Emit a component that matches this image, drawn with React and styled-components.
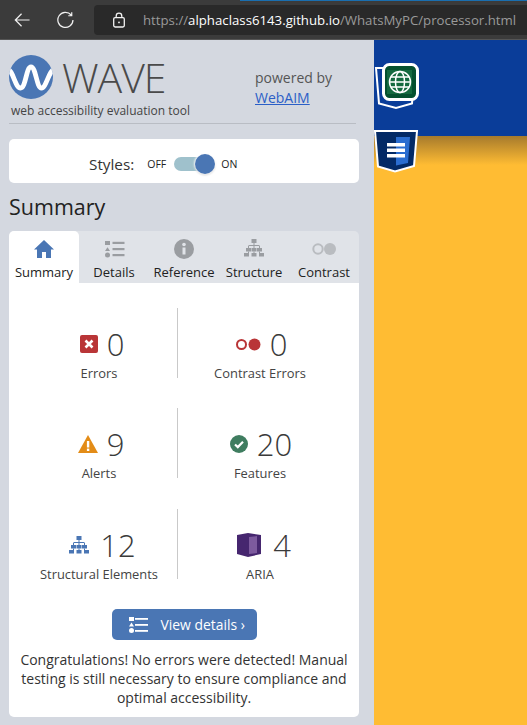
import React from "react";
import styled, { createGlobalStyle } from "styled-components";

const Global = createGlobalStyle`
  html, body { margin: 0; padding: 0; background: #d4d8e0; }
  body { width: 527px; height: 725px; overflow: hidden; font-family: "Open Sans", "Noto Sans", sans-serif; color: #333; }
  * { box-sizing: border-box; }
`;

const Page = styled.div`display: flex; flex-direction: column; width: 527px; height: 725px; overflow: hidden;`;

const BrowserBar = styled.header`
  position: relative; height: 40px; flex: none; background: #3b3b3b; display: flex; align-items: flex-start;
  padding: 5px 0 0 14px; border-bottom: 1px solid #555;
  &::before { content: ""; position: absolute; left: 240px; right: 0; top: 0; height: 1px; background: #1a6fb0; }
`;
const NavIcon = styled.svg`width: ${p => p.$w}px; height: 18px; flex: none; margin-top: 6px; margin-right: ${p => p.$gap}px;`;
const AddressField = styled.div`
  flex: 1; height: 30px; background: #292929; border-radius: 4px 0 0 4px; display: flex; align-items: center; padding-left: 18px; gap: 14px;
  font-family: "Open Sans", sans-serif; font-size: 13.23px; color: #9a9a9a; white-space: nowrap; overflow: hidden;
`;
const Host = styled.span`color: #fff;`;
const UrlText = styled.span`margin-left: 3px;`;

const Main = styled.div`flex: 1; display: flex; min-height: 0;`;
const Sidebar = styled.aside`width: 374px; flex: none; background: #d4d8e0; padding: 0 15px 0 9px; display: flex; flex-direction: column;`;

const Header = styled.div`display: flex; height: 84px; width: 347px; border-bottom: 1px solid #b9bdc4; position: relative;`;
const Brand = styled.div`width: 246px; padding-top: 15px;`;
const LogoRow = styled.div`display: flex; align-items: center; height: 44px; gap: 9px;`;
const Wordmark = styled.span`font-size: 41px; font-weight: 300; color: #4a4a4a; line-height: 44px; letter-spacing: -1px;`;
const Tagline = styled.div`font-size: 12px; color: #444; margin: 4px 0 0 2px; line-height: 16px; white-space: nowrap;`;
const Powered = styled.div`padding-top: 28px; font-size: 14px; color: #555; line-height: 20px; white-space: nowrap;`;
const PoweredLink = styled.a`display: block; color: #2b5fc7; text-decoration: underline; margin-top: 0;`;

const StylesCard = styled.div`
  margin-top: 15px; width: 350px; height: 44px; background: #fff; border-radius: 5px; display: flex; align-items: center; padding: 5px 0 0 80px;
`;
const StylesLabel = styled.span`font-size: 15.3px; color: #333; margin-right: 13px;`;
const SwitchText = styled.span`font-size: 10.5px; color: #222;`;
const SwitchTrack = styled.div`position: relative; width: 32px; height: 14px; background: #9fc1cc; border-radius: 7px; margin: 0 15px 0 8px;`;
const SwitchKnob = styled.div`
  position: absolute; right: -9px; top: -3px; width: 20px; height: 20px; border-radius: 50%; background: #4a76b4; box-shadow: 0 0 2px 1px rgba(255,255,255,.9), 0 1px 2px rgba(0,0,0,.35);
`;

const Heading = styled.h1`margin: 9px 0 9px; font-size: 21.5px; font-weight: 400; line-height: 30px; color: #222;`;

const TabBar = styled.div`display: flex; width: 350px; height: 52px; background: #e0e3e8; border-radius: 5px 5px 0 0;`;
const Tab = styled.div`
  width: ${p => p.$w}px; flex: none; display: flex; flex-direction: column; align-items: center; padding-top: 7px;
  background: ${p => (p.$active ? "#fff" : "transparent")}; border-radius: ${p => (p.$active ? "5px 5px 0 0" : "0")};
  font-size: 13px; color: #222; white-space: nowrap;
`;
const TabIcon = styled.svg`width: ${p => p.$w || 22}px; height: 22px; display: block;`;
const TabLabel = styled.span`line-height: 18px; margin-top: 3px;`;

const Panel = styled.section`width: 350px; height: 434px; background: #fff; border-radius: 0 0 5px 5px; padding-top: 25px; display: flex; flex-direction: column; align-items: center;`;
const StatGrid = styled.div`
  display: grid; grid-template-columns: 157px 164px; grid-template-rows: 70px 71px 70px; row-gap: 30px; width: 350px; padding-left: 12px;
`;
const Stat = styled.div`
  height: 70px; display: flex; flex-direction: column; align-items: center;
  ${p => p.$divider && "border-right: 1px solid #c9c9c9;"}
  padding-top: 16px;
`;
const StatTop = styled.div`display: flex; align-items: center; gap: ${p => p.$gap}px; height: 40px; padding-left: ${p => p.$shift}px;`;
const StatIcon = styled.svg`display: block; flex: none;`;
const Count = styled.span`font-size: 31px; font-weight: 300; color: #3a3a3a; line-height: 40px;`;
const StatLabel = styled.div`font-size: 12.9px; color: #444; line-height: 18px; white-space: nowrap;`;

const DetailsButton = styled.button`
  margin-top: 30px; width: 145px; height: 31px; border: 0; border-radius: 5px; background: #4a76b4; color: #fff; display: flex; align-items: center;
  padding: 0 0 0 17px; font-family: inherit; font-size: 13.9px; gap: 12px; white-space: nowrap;
`;
const Message = styled.p`margin: 10px 0 0; width: 335px; text-align: center; font-size: 14px; line-height: 19px; color: #333;`;

const Stage = styled.main`
  position: relative; flex: 1; background: linear-gradient(#0a3d99 0, #0a3d99 96px, #a67a2c 96px, #ffbc33 125px);
`;
const Badge = styled.svg`position: absolute; left: ${p => p.$x}px; top: ${p => p.$y}px;`;

const ListGlyph = ({ color }) => (
  <>
    <rect x="2" y="3" width="5" height="4" fill={color} />
    <path d="M4.5 9.2 7 13H2z" fill={color} />
    <circle cx="4.5" cy="17" r="2.5" fill={color} />
    <rect x="9.5" y="3.8" width="12" height="2.2" fill={color} />
    <rect x="9.5" y="10" width="12" height="2.2" fill={color} />
    <rect x="9.5" y="16" width="12" height="2.2" fill={color} />
  </>
);

const TreeGlyph = ({ color }) => (
  <g fill={color}>
    <rect x="8.5" y="1" width="5" height="4" />
    <rect x="10.5" y="5" width="1" height="2" />
    <rect x="5.5" y="7" width="11" height="1" />
    <rect x="5" y="8" width="1" height="2" /><rect x="16" y="8" width="1" height="2" /><rect x="10.5" y="8" width="1" height="2" />
    <rect x="3" y="10" width="5" height="3.5" /><rect x="14" y="10" width="5" height="3.5" />
    <rect x="5" y="13.5" width="1" height="2" /><rect x="16" y="13.5" width="1" height="2" />
    <rect x="8.5" y="10" width="5" height="3.5" />
    <rect x="1" y="15" width="5" height="3.5" /><rect x="8.5" y="15" width="5" height="3.5" /><rect x="16" y="15" width="5" height="3.5" />
    <rect x="10.5" y="13.5" width="1" height="2" />
  </g>
);

const stats = [
  { label: "Errors", n: "0", w: 18, h: 18, gap: 9, shift: 6, divider: true, icon: <><rect width="18" height="18" rx="2" fill="#b93537" /><path d="M5.5 5.500l7 7M12.500 5.500l-7 7" stroke="#fff" strokeWidth="2.6" /></>, vb: "0 0 18 18" },
  { label: "Contrast Errors", n: "0", w: 25, h: 13, gap: 9, shift: 3, icon: <><circle cx="5.500" cy="6.500" r="4.500" fill="none" stroke="#b93537" strokeWidth="2" /><circle cx="18.500" cy="6.500" r="6" fill="#b93537" /></>, vb: "0 0 25 13" },
  { label: "Alerts", n: "9", w: 20, h: 18, gap: 9, shift: 4, divider: true, icon: <><path d="M10 0l10 18H0z" fill="#e38c17" /><rect x="8.900" y="6" width="2.400" height="6.500" fill="#fff" /><rect x="8.900" y="13.600" width="2.400" height="2.400" fill="#fff" /></>, vb: "0 0 20 18" },
  { label: "Features", n: "20", w: 18, h: 18, gap: 9, shift: 2, icon: <><circle cx="9" cy="9" r="9" fill="#3f7d60" /><path d="M5 9.500l2.800 2.600L13 6.800" fill="none" stroke="#fff" strokeWidth="2.200" /></>, vb: "0 0 18 18" },
  { label: "Structural Elements", n: "12", w: 22, h: 20, gap: 10, shift: 6, divider: true, icon: <TreeGlyph color="#4a76b4" />, vb: "0 0 22 20" },
  { label: "ARIA", n: "4", w: 24, h: 24, gap: 12, shift: 8, icon: <><path d="M0 2l11-2 13 2v19l-13 3-11-3z" fill="#46266f" /><path d="M12 4l8-1v17l-8 1z" fill="#7d5a9e" /></>, vb: "0 0 24 24" },
];

export default function App() {
  return (
    <Page>
      <Global />
      <BrowserBar>
        <NavIcon viewBox="0 0 18 18" $w={16} $gap={27} fill="none" stroke="#f0f0f0" strokeWidth="1.4">
          <path d="M17.500 9H1.500M8.500 2L1.500 9l7 7" />
        </NavIcon>
        <NavIcon viewBox="0 0 18 18" $w={17} $gap={20} fill="none" stroke="#f0f0f0" strokeWidth="1.3">
          <path d="M15 3.700A8 8 0 1 0 16.900 9M15.600 .800v3.700h-3.700" />
        </NavIcon>
        <AddressField>
          <svg width="14" height="16" viewBox="0 0 14 16" fill="none" stroke="#f2f2f2" strokeWidth="1.300">
            <rect x="1.700" y="5.700" width="10.600" height="9.300" rx="1.400" />
            <path d="M4.200 5.700V4a2.800 2.800 0 0 1 5.600 0v1.700" />
            <circle cx="7" cy="10.400" r=".9" fill="#f2f2f2" stroke="none" />
          </svg>
          <UrlText>https://<Host>alphaclass6143.github.io</Host>/WhatsMyPC/processor.html</UrlText>
        </AddressField>
      </BrowserBar>
      <Main>
        <Sidebar>
          <Header>
            <Brand>
              <LogoRow>
                <svg width="44" height="44" viewBox="0 0 44 44">
                  <defs><clipPath id="lc"><circle cx="22" cy="22" r="22" /></clipPath></defs>
                  <circle cx="22" cy="22" r="22" fill="#4a76b4" />
                  <path clipPath="url(#lc)" d="M-2 14C4 14 6 33 11.500 33S17 12 22 12s5.500 21 10.500 21S40 14 46 14" fill="none" stroke="#fff" strokeWidth="4.800" />
                </svg>
                <Wordmark>WAVE</Wordmark>
              </LogoRow>
              <Tagline>web accessibility evaluation tool</Tagline>
            </Brand>
            <Powered>powered by<PoweredLink>WebAIM</PoweredLink></Powered>
          </Header>
          <StylesCard>
            <StylesLabel>Styles:</StylesLabel>
            <SwitchText>OFF</SwitchText>
            <SwitchTrack><SwitchKnob /></SwitchTrack>
            <SwitchText>ON</SwitchText>
          </StylesCard>
          <Heading>Summary</Heading>
          <TabBar>
            <Tab $w={70} $active>
              <TabIcon viewBox="0 0 22 22"><path d="M11 2L1 11.500h3V20h5v-6h4v6h5v-8.500h3z" fill="#4a76b4" /></TabIcon>
              <TabLabel>Summary</TabLabel>
            </Tab>
            <Tab $w={70}>
              <TabIcon viewBox="0 0 22 22"><ListGlyph color="#9a9da1" /></TabIcon>
              <TabLabel>Details</TabLabel>
            </Tab>
            <Tab $w={70}>
              <TabIcon viewBox="0 0 22 22">
                <circle cx="11" cy="11" r="10" fill="#9a9da1" />
                <rect x="9.500" y="9.500" width="3" height="7" fill="#e0e3e8" />
                <circle cx="11" cy="6.500" r="1.800" fill="#e0e3e8" />
              </TabIcon>
              <TabLabel>Reference</TabLabel>
            </Tab>
            <Tab $w={70}>
              <TabIcon viewBox="0 0 22 22"><TreeGlyph color="#9a9da1" /></TabIcon>
              <TabLabel>Structure</TabLabel>
            </Tab>
            <Tab $w={70}>
              <TabIcon viewBox="0 0 26 22" $w={26}>
                <circle cx="7" cy="11" r="4.700" fill="none" stroke="#b9bcc0" strokeWidth="2" />
                <circle cx="19" cy="11" r="6" fill="#b9bcc0" />
              </TabIcon>
              <TabLabel>Contrast</TabLabel>
            </Tab>
          </TabBar>
          <Panel>
            <StatGrid>
              {stats.map(s => (
                <Stat key={s.label} $divider={s.divider}>
                  <StatTop $gap={s.gap} $shift={s.shift}>
                    <StatIcon width={s.w} height={s.h} viewBox={s.vb}>{s.icon}</StatIcon>
                    <Count>{s.n}</Count>
                  </StatTop>
                  <StatLabel>{s.label}</StatLabel>
                </Stat>
              ))}
            </StatGrid>
            <DetailsButton>
              <svg width="20" height="16" viewBox="0 0 20 16" fill="#fff">
                <rect x="0" y="0" width="5" height="4" />
                <path d="M2.500 5.500L5 9.500H0z" />
                <circle cx="2.500" cy="13.500" r="2.500" />
                <rect x="6" y="1" width="13" height="1.800" />
                <rect x="6" y="7" width="13" height="1.800" />
                <rect x="6" y="13" width="13" height="1.800" />
              </svg>
              View details ›
            </DetailsButton>
            <Message>Congratulations! No errors were detected! Manual testing is still necessary to ensure compliance and optimal accessibility.</Message>
          </Panel>
        </Sidebar>
        <Stage>
          <Badge $x={0} $y={22} width="48" height="48" viewBox="0 0 48 48">
            <path d="M2 6L5 41.500 22 46 38 41.500 39 30 39 6z" fill="#0a3d99" stroke="#fff" strokeWidth="2" />
            <rect x="9.500" y="2.500" width="34" height="35" rx="6" fill="#04502f" stroke="#fff" strokeWidth="3" />
            <rect x="13" y="8" width="25" height="24" fill="#14693f" />
            <g fill="none" stroke="#fff" strokeWidth="1.500">
              <circle cx="26" cy="20" r="10.500" />
              <ellipse cx="26" cy="20" rx="4.500" ry="10.500" />
              <path d="M15.500 20h21M17 15h18M17 25h18" />
            </g>
          </Badge>
          <Badge $x={-1} $y={89} width="46" height="44" viewBox="0 0 46 44">
            <path d="M2 2h42l-3 35-19 5.500-17-5z" fill="#032a66" stroke="#fff" strokeWidth="2" />
            <path d="M23 8h14l-2 26-12 2.500z" fill="#2a6dd0" />
            <rect x="14" y="14" width="18" height="3.500" fill="#fff" />
            <rect x="14" y="19.500" width="18" height="3.500" fill="#fff" />
            <rect x="14" y="25" width="18" height="3.500" fill="#fff" />
          </Badge>
        </Stage>
      </Main>
    </Page>
  );
}
